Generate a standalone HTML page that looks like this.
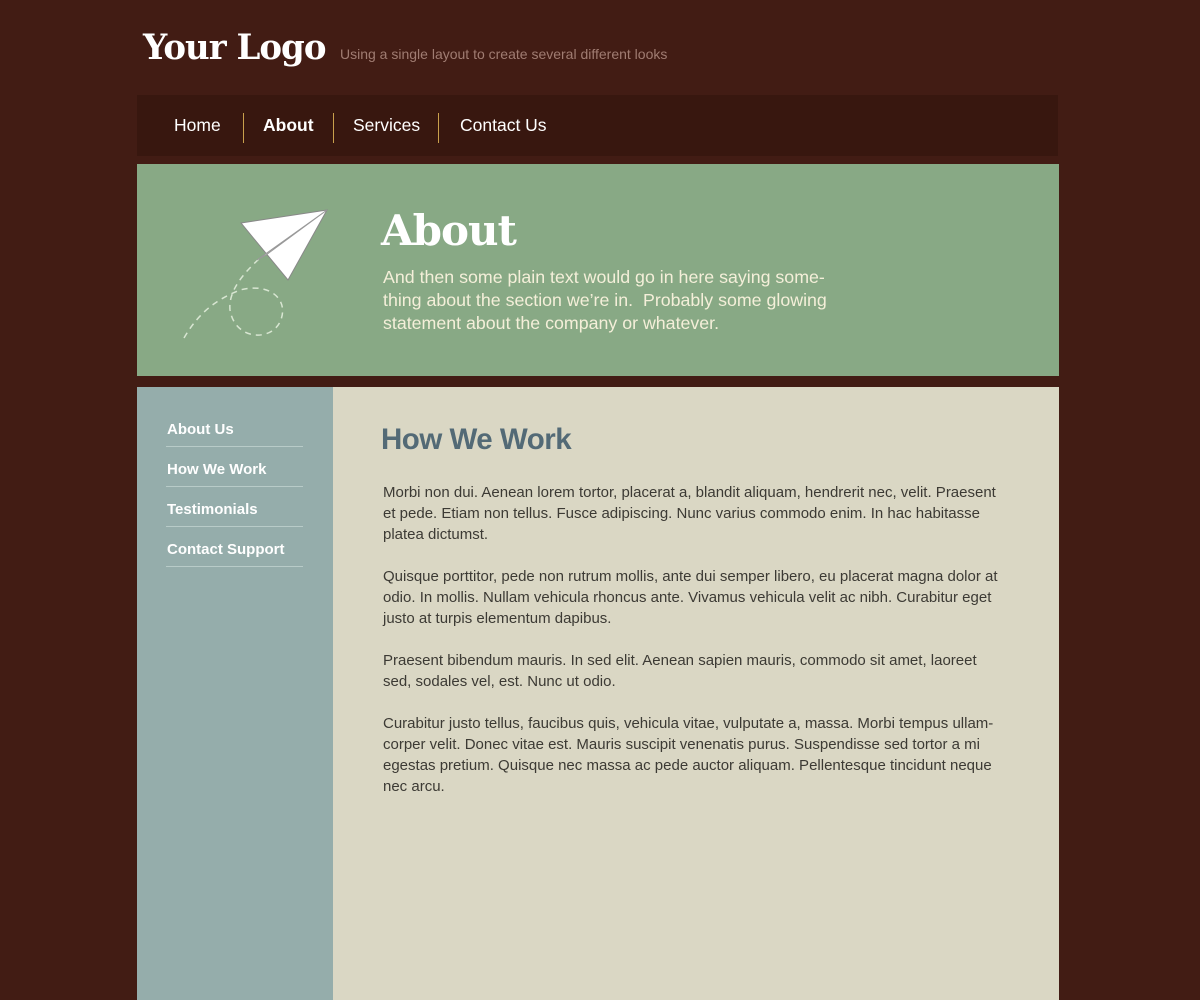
<!DOCTYPE html>
<html><head><meta charset="utf-8"><style>
*{margin:0;padding:0;box-sizing:border-box}
body{width:1200px;height:1000px;background:#421c14;font-family:"Liberation Sans",sans-serif;position:relative;overflow:hidden}
.abs{position:absolute}
.logo{left:143px;top:27px;font-family:"DejaVu Serif","Liberation Serif",serif;font-weight:bold;font-size:35px;color:#fff;letter-spacing:-1px;white-space:nowrap;transform:scaleX(0.97);transform-origin:left top}
.tag{left:340px;top:46px;font-size:14px;color:#a07c72}
.nav{left:137px;top:95px;width:921px;height:61px;background:#38170f}
.nav span{position:absolute;top:20px;font-size:17.5px;color:#fff}
.sep{position:absolute;top:18px;width:1px;height:30px;background:#c9a04c}
.hero{left:137px;top:164px;width:922px;height:212px;background:#88a985}
.h1{left:381px;top:206px;font-family:"DejaVu Serif","Liberation Serif",serif;font-weight:bold;font-size:42px;color:#fff;letter-spacing:-1px}
.hp{left:383px;top:266px;font-size:17.8px;line-height:23px;color:#f4efd9}
.side{left:137px;top:387px;width:196px;height:613px;background:#95adab}
.side div{position:absolute;left:29px;width:137px;height:40px;border-bottom:1px solid #b8cbc8;color:#fff;font-weight:bold;font-size:15px;padding:14px 0 0 1px;line-height:18px}
.main{left:333px;top:387px;width:726px;height:613px;background:#dad7c4}
.h2{left:381px;top:423px;font-size:29.5px;font-weight:bold;color:#536a76;letter-spacing:-0.5px}
.p{left:383px;font-size:15px;line-height:21px;color:#3c3a34;white-space:nowrap}
</style></head><body>
<div class="abs logo">Your Logo</div>
<div class="abs tag">Using a single layout to create several different looks</div>
<div class="abs nav">
<span style="left:37px">Home</span><div class="sep" style="left:106px"></div>
<span style="left:126px;font-weight:bold">About</span><div class="sep" style="left:196px"></div>
<span style="left:216px">Services</span><div class="sep" style="left:301px"></div>
<span style="left:323px">Contact Us</span>
</div>
<div class="abs hero"></div>
<svg class="abs" style="left:0;top:0" width="1200" height="400">
<path d="M184 338 C200 310 220 298 240 290 C270 282 290 300 280 322 C270 342 235 340 230 310 C228 290 245 272 260 258" fill="none" stroke="#d8e6d2" stroke-width="1.5" stroke-dasharray="6 5"/>
<polygon points="241,223 327,210 288,280" fill="#fff" stroke="#888" stroke-width="1"/>
<polygon points="327,210 257,260 266,255" fill="#ddd" stroke="#999" stroke-width="1"/>
</svg>
<div class="abs h1">About</div>
<div class="abs hp">And then some plain text would go in here saying some-<br>thing about the section we’re in.&nbsp; Probably some glowing<br>statement about the company or whatever.</div>
<div class="abs side">
<div style="top:20px">About Us</div>
<div style="top:60px">How We Work</div>
<div style="top:100px">Testimonials</div>
<div style="top:140px">Contact Support</div>
</div>
<div class="abs main"></div>
<div class="abs h2">How We Work</div>
<div class="abs p" style="top:482px">Morbi non dui. Aenean lorem tortor, placerat a, blandit aliquam, hendrerit nec, velit. Praesent<br>et pede. Etiam non tellus. Fusce adipiscing. Nunc varius commodo enim. In hac habitasse<br>platea dictumst.</div>
<div class="abs p" style="top:566px">Quisque porttitor, pede non rutrum mollis, ante dui semper libero, eu placerat magna dolor at<br>odio. In mollis. Nullam vehicula rhoncus ante. Vivamus vehicula velit ac nibh. Curabitur eget<br>justo at turpis elementum dapibus.</div>
<div class="abs p" style="top:650px">Praesent bibendum mauris. In sed elit. Aenean sapien mauris, commodo sit amet, laoreet<br>sed, sodales vel, est. Nunc ut odio.</div>
<div class="abs p" style="top:713px">Curabitur justo tellus, faucibus quis, vehicula vitae, vulputate a, massa. Morbi tempus ullam-<br>corper velit. Donec vitae est. Mauris suscipit venenatis purus. Suspendisse sed tortor a mi<br>egestas pretium. Quisque nec massa ac pede auctor aliquam. Pellentesque tincidunt neque<br>nec arcu.</div>
</body></html>
